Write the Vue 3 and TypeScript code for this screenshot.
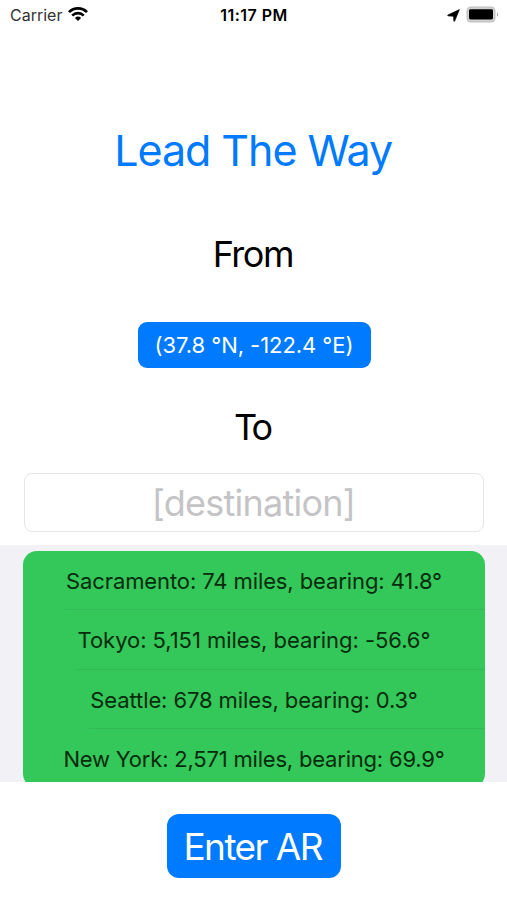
<script setup lang="ts">
interface Destination {
  name: string
  miles: string
  bearing: string
}

const origin = '(37.8 °N, -122.4 °E)'

const destinations: Destination[] = [
  { name: 'Sacramento', miles: '74', bearing: '41.8' },
  { name: 'Tokyo', miles: '5,151', bearing: '-56.6' },
  { name: 'Seattle', miles: '678', bearing: '0.3' },
  { name: 'New York', miles: '2,571', bearing: '69.9' },
]
</script>

<template>
  <main class="screen">
    <header class="status">
      <div class="status-left">
        <span class="carrier">Carrier</span>
        <svg class="wifi" viewBox="0 0 20 14" width="20" height="14">
          <g fill="none" stroke="#000" stroke-width="2.7">
            <path d="M1 5.1a12.7 12.7 0 0 1 18 0" />
            <path d="M4.2 8.6a8.2 8.2 0 0 1 11.6 0" />
          </g>
          <path d="M6.9 11a4.5 4.5 0 0 1 6.2 0L10 14z" />
        </svg>
      </div>
      <time class="clock">11:17 PM</time>
      <div class="status-right">
        <svg class="location" viewBox="0 0 13 13" width="13" height="13">
          <path d="M12.4.6 7.6 12.2h-.7L6.5 7.3.8 6.8v-.7z" stroke="#000" stroke-width=".7" stroke-linejoin="round" />
        </svg>
        <svg class="battery" viewBox="0 0 33 17" width="33" height="17">
          <rect x=".5" y=".5" width="29" height="16" rx="4.6" fill="#bdbdbd" />
          <rect x="1.5" y="1.5" width="27" height="14" rx="3.7" fill="#d2d2d2" />
          <rect x="3" y="3.2" width="24" height="10.2" rx="1.4" />
          <path d="M31 6.3a2.6 2.6 0 0 1 0 4.4z" fill="#aaa" />
        </svg>
      </div>
    </header>

    <h1 class="title">Lead The Way</h1>
    <h2 class="label from">From</h2>
    <button class="origin" type="button"><span>{{ origin }}</span></button>
    <h2 class="label to">To</h2>
    <input class="destination" type="text" placeholder="[destination]" />

    <section class="results">
      <ul class="list">
        <li v-for="d in destinations" :key="d.name" class="row">
          <span class="text">{{ d.name }}: {{ d.miles }} miles, bearing: {{ d.bearing }}°</span>
        </li>
      </ul>
    </section>

    <button class="enter" type="button"><span>Enter AR</span></button>
  </main>
</template>

<style>
body {
  margin: 0;
  background: #fff;
}
</style>

<style scoped>
.screen {
  display: flex;
  flex-direction: column;
  align-items: center;
  box-sizing: border-box;
  width: 507px;
  height: 900px;
  overflow: hidden;
  background: #fff;
  color: #000;
  font-family: Inter, 'Liberation Sans', sans-serif;
}

.status {
  display: grid;
  grid-template-columns: 1fr auto 1fr;
  align-items: center;
  box-sizing: border-box;
  width: 100%;
  height: 30px;
  padding: 0 8px 0 10px;
  font-size: 16px;
  line-height: 30px;
}

.status-left,
.status-right {
  display: flex;
  align-items: center;
}

.status-left {
  gap: 6px;
}

.wifi,
.battery {
  margin-bottom: 2px;
}

.carrier {
  color: #333;
}

.clock {
  padding-right: 1px;
  font-weight: 600;
  letter-spacing: 0.5px;
}

.status-right {
  justify-content: flex-end;
  gap: 6px;
}

.title,
.label {
  margin: 0;
  font-weight: 400;
}

.title {
  margin-top: 90px;
  padding-right: 0.6px;
  color: #007aff;
  font-size: 43px;
  letter-spacing: -1.05px;
  line-height: 60px;
}

.label {
  padding-right: 1.4px;
  font-size: 36px;
  letter-spacing: -1.5px;
  line-height: 48px;
}

.from {
  margin-top: 50px;
}

.to {
  margin-top: 35px;
  padding-right: 2.8px;
  letter-spacing: -3px;
}

button {
  display: flex;
  align-items: center;
  justify-content: center;
  padding: 0;
  border: 0;
  background: #007aff;
  color: #fff;
  font-family: inherit;
  white-space: nowrap;
}

.origin {
  width: 233px;
  height: 46px;
  margin-top: 44px;
  margin-left: 1px;
  border-radius: 9px;
  font-size: 22px;
  letter-spacing: -0.05px;
}

.destination {
  box-sizing: border-box;
  width: 460px;
  height: 59px;
  margin-top: 22px;
  padding: 0;
  border: 1.5px solid #e6e6e6;
  border-radius: 8px;
  background: #fff;
  font-family: inherit;
  font-size: 36px;
  letter-spacing: -0.75px;
  text-align: center;
}

.destination::placeholder {
  color: #c4c4c6;
  opacity: 1;
}

.results {
  box-sizing: border-box;
  width: 100%;
  height: 237px;
  margin-top: 13px;
  padding: 6px 22px 0 23px;
  overflow: hidden;
  background: #f1f1f6;
}

.list {
  margin: 0;
  padding: 0;
  border-radius: 14px;
  background: #34c759;
  list-style: none;
}

.row {
  display: grid;
  grid-template-columns: 1fr auto 1fr;
  grid-template-rows: 58.3px 1px;
  color: #052b0d;
  font-size: 22px;
  letter-spacing: -0.1px;
  line-height: 60px;
}

.row:nth-child(2) {
  letter-spacing: -0.05px;
}

.row:last-child {
  letter-spacing: -0.2px;
}

.text {
  grid-column: 2;
  height: 58px;
  white-space: nowrap;
}

.row:not(:last-child)::after {
  grid-column: 2 / 4;
  margin-left: -1px;
  background: #32b854;
  content: '';
}

.enter {
  width: 174px;
  height: 64px;
  margin-top: 32px;
  border-radius: 12px;
  font-size: 37px;
  letter-spacing: -1.55px;
}

.enter span {
  padding-right: 1.5px;
}
</style>
